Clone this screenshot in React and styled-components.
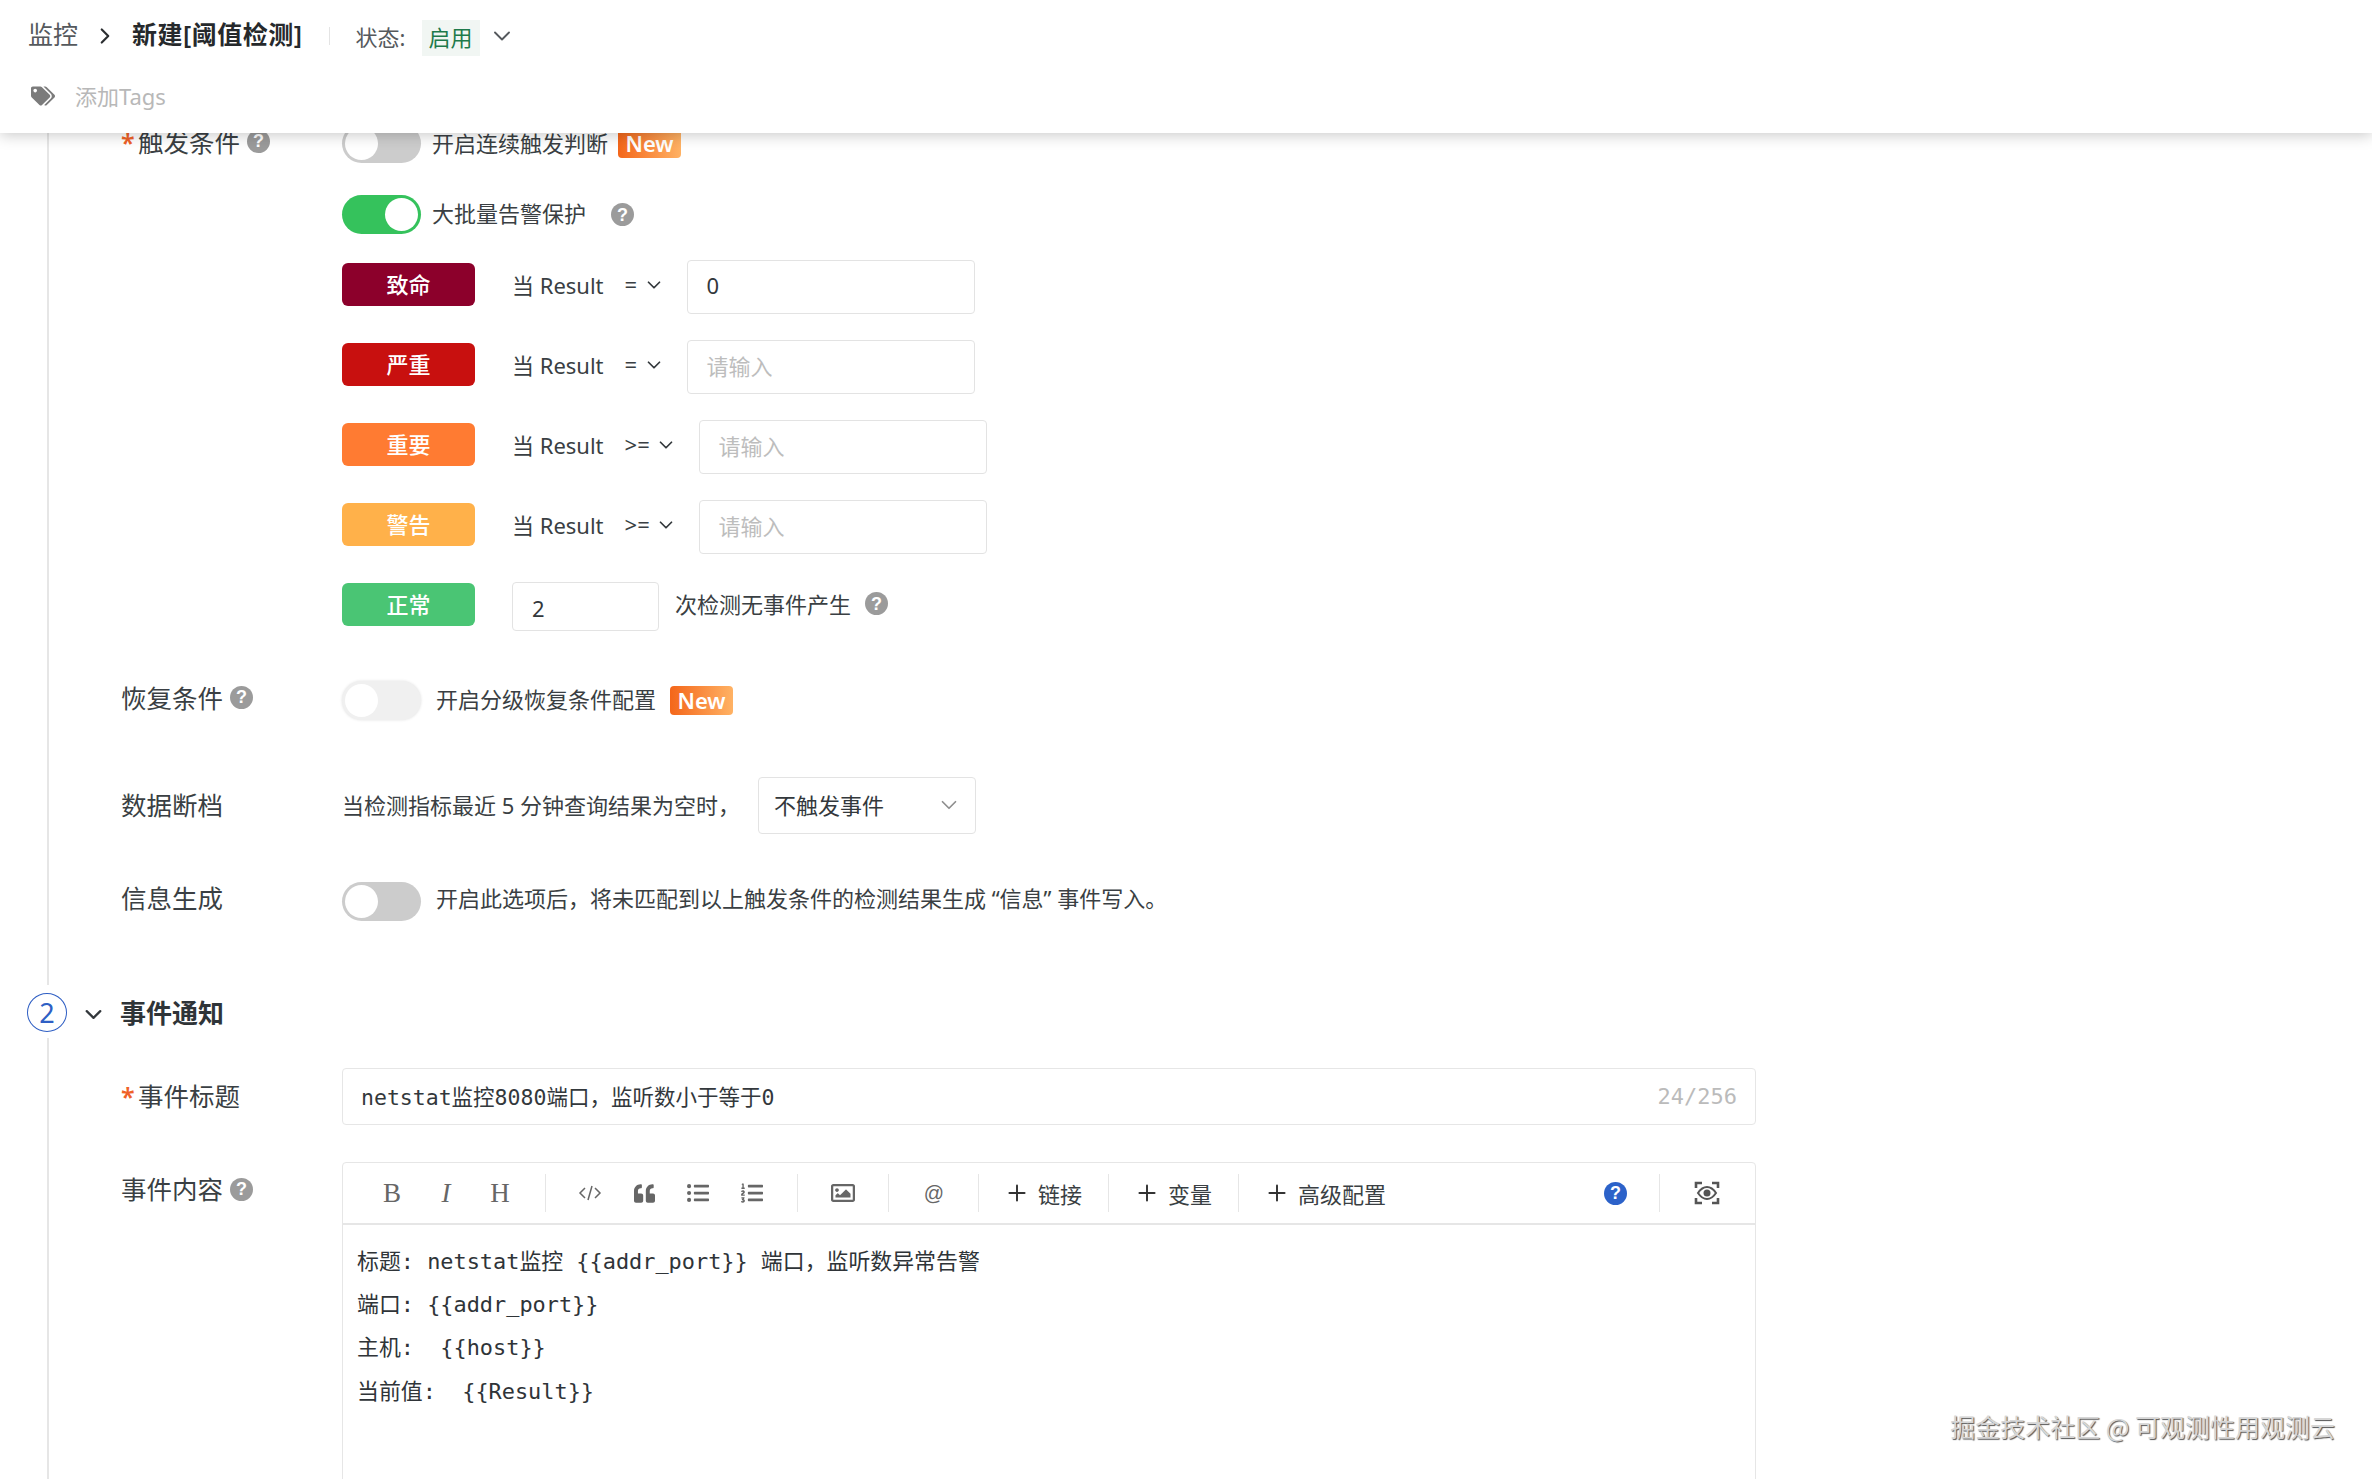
import React from 'react';
import styled, { createGlobalStyle } from 'styled-components';
import { FaQuoteLeft, FaListUl, FaListOl, FaRegImage, FaTags } from 'react-icons/fa';
import { ChevronDown, ChevronRight, Plus } from 'lucide-react';

const Global = createGlobalStyle`
  html, body { margin: 0; padding: 0; background: #fff; }
  * { box-sizing: border-box; }
  body { font-family: "Noto Sans", "Noto Sans CJK SC", sans-serif; color: #33383c; }
`;

const Page = styled.div`
  position: relative;
  height: 1479px;
  overflow: hidden;
  background: #fff;
`;
const Header = styled.header`
  position: absolute;
  top: 0; left: 0; right: 0;
  height: 133px;
  background: #fff;
  z-index: 5;
  padding-left: 28px;
  box-shadow: 0 2px 14px rgba(0,0,0,.22);
`;
const HeaderRow = styled.div`
  display: flex;
  align-items: center;
  height: 72px;
`;
const Crumb = styled.span`
  font-size: 25px;
  color: #55595d;
  margin-bottom: 6px;
`;
const CrumbCurrent = styled.span`
  font-size: 25px;
  letter-spacing: .5px;
  font-weight: 600;
  color: #26292c;
  margin-bottom: 6px;
`;
const CrumbArrow = styled(ChevronRight)`
  color: #2b2e31;
  margin: 0 14px 0 14px;
`;
const HeaderDivider = styled.i`
  width: 1px;
  height: 18px;
  background: #e4e4e4;
  margin: 0 26px;
`;
const StateLabel = styled.span`
  font-size: 22px;
  color: #55595d;
  width: 66px;
`;
const StateTag = styled.span`
  display: flex;
  align-items: center;
  justify-content: center;
  width: 58px;
  height: 36px;
  margin-top: 4px;
  padding-bottom: 5px;
  background: #f1f6f3;
  color: #1e7a4b;
  font-size: 22px;
`;
const StateArrow = styled(ChevronDown)`
  color: #55595d;
  margin-left: 8px;
`;
const TagsRow = styled.div`
  display: flex;
  align-items: center;
  height: 52px;
  padding-left: 3px;
`;
const TagIcon = styled(FaTags)`
  color: #7b7b7b;
  font-size: 24px;
  margin-top: -4px;
`;
const TagsHint = styled.span`
  font-size: 22px;
  color: #b8b8b8;
  margin-left: 20px;
  margin-bottom: 6px;
`;

const Body = styled.main`
  padding-top: 123px;
`;
const Timeline = styled.section`
  margin-left: 47px;
  border-left: 2px solid #e6e6e6;
  padding-left: 72px;
  padding-bottom: ${p => p.$pb || 0}px;
  padding-top: ${p => p.$pt || 0}px;
`;
const Field = styled.div`
  display: flex;
  align-items: ${p => p.$top ? 'flex-start' : 'center'};
  margin-top: ${p => p.$mt || 0}px;
  height: ${p => p.$h ? `${p.$h}px` : 'auto'};
`;
const Label = styled.div`
  flex: none;
  width: 221px;
  display: flex;
  align-items: center;
  font-size: 25.5px;
  line-height: 36px;
  color: #3a3f43;
  margin-top: ${p => p.$mt || 0}px;
`;
const Star = styled.span`
  color: #ef6128;
  width: 17px;
  flex: none;
  font-size: 25px;
  font-weight: 600;
`;
const Help = styled.span`
  flex: none;
  width: 23px;
  height: 23px;
  border-radius: 50%;
  background: ${p => p.$blue ? '#2c62c9' : '#9b9b9b'};
  color: #fff;
  font-family: "Liberation Sans", sans-serif;
  font-size: 18px;
  font-weight: 700;
  line-height: 1;
  display: flex;
  align-items: center;
  justify-content: center;
  margin-left: ${p => p.$ml ?? 7}px;
  margin-top: ${p => p.$mt || 0}px;
`;
const Column = styled.div`
  display: flex;
  flex-direction: column;
  flex: 1;
`;
const Line = styled.div`
  display: flex;
  align-items: ${p => p.$top ? 'flex-start' : 'center'};
  margin-top: ${p => p.$mt || 0}px;
  height: ${p => p.$h}px;
  font-size: 22px;
`;
const Toggle = styled.span`
  position: relative;
  flex: none;
  width: 79px;
  height: 39px;
  border-radius: 20px;
  background: ${p => p.$on ? '#35c25c' : p.$faint ? '#f0f0f0' : '#cccccc'};
  box-shadow: ${p => p.$faint ? '0 0 3px rgba(0,0,0,.12)' : 'none'};
  margin-right: ${p => p.$mr || 11}px;
  &::after {
    content: "";
    position: absolute;
    top: 3px;
    left: ${p => p.$on ? '43px' : '3px'};
    width: 33px;
    height: 33px;
    border-radius: 50%;
    background: #fff;
  }
`;
const NewBadge = styled.span`
  flex: none;
  width: 63px;
  height: 29px;
  border-radius: 4px;
  margin-left: ${p => p.$ml}px;
  background: linear-gradient(90deg, #f4661a, #ffb264);
  color: #fff;
  font-size: 22px;
  font-weight: 600;
  line-height: 28px;
  text-align: center;
`;
const Level = styled.span`
  flex: none;
  width: 133px;
  height: 43px;
  margin-top: 3px;
  margin-right: 37px;
  border-radius: 6px;
  background: ${p => p.$color};
  color: #fff;
  font-size: 22px;
  font-weight: 500;
  line-height: 42px;
  text-align: center;
`;
const Cond = styled.span`
  display: flex;
  align-items: center;
  height: 50px;
  padding-bottom: 3px;
  font-size: 22px;
  color: #3a3f43;
  white-space: pre;
`;
const Op = styled.span`
  margin-left: 21px;
  width: ${p => p.$w}px;
`;
const CondArrow = styled(ChevronDown)`
  color: #33383c;
  margin: 3px 22px 0 -5px;
`;
const Box = styled.div`
  flex: none;
  width: ${p => p.$w}px;
  height: ${p => p.$h}px;
  margin-top: ${p => p.$mt || 0}px;
  border: 1px solid #e3e3e3;
  border-radius: 4px;
  background: #fff;
  display: flex;
  align-items: center;
  padding: ${p => p.$pt || 0}px 0 ${p => p.$pb || 0}px 19px;
  font-size: 22px;
  color: ${p => p.$ph ? '#bdbdbd' : '#33383c'};
`;
const InlineText = styled.span`
  font-size: 22px;
  line-height: 30px;
  color: #3a3f43;
  white-space: pre;
  margin-left: ${p => p.$ml || 0}px;
  margin-bottom: ${p => p.$mb || 0}px;
`;
const Select = styled(Box)`
  justify-content: space-between;
  padding: 0 13px 4px 15px;
  margin-left: 18px;
  margin-top: 0;
`;
const SelectArrow = styled(ChevronDown)`
  color: #8f8f8f;
  margin-top: 3px;
`;
const SectionHead = styled.div`
  display: flex;
  align-items: center;
  height: 39px;
  margin: 8px 0 6px;
  padding-left: 27px;
`;
const StepNo = styled.span`
  flex: none;
  width: 40px;
  height: 39px;
  border: 1px solid #2f5fc4;
  border-radius: 50%;
  color: #2f5fc4;
  font-size: 27px;
  line-height: 37px;
  text-align: center;
`;
const SectionArrow = styled(ChevronDown)`
  color: #33383c;
  margin: 3px 13px 0 13px;
`;
const SectionTitle = styled.h2`
  margin: 0 0 2px;
  font-size: 26px;
  font-weight: 700;
  color: #2f3438;
`;
const TitleBox = styled.div`
  flex: none;
  width: 1414px;
  height: 57px;
  border: 1px solid #e6e6e6;
  border-radius: 4px;
  display: flex;
  align-items: center;
  justify-content: space-between;
  padding: 0 18px 3px 18px;
  font-family: "DejaVu Sans Mono", "Noto Sans CJK SC", monospace;
  font-size: 21.5px;
  color: #33383c;
`;
const Counter = styled.span`
  color: #bbb;
  font-size: 22px;
  margin-top: 3px;
`;
const Editor = styled.div`
  flex: none;
  width: 1414px;
  height: 500px;
  border: 1px solid #e6e6e6;
  border-radius: 4px 4px 0 0;
`;
const Toolbar = styled.div`
  display: flex;
  align-items: center;
  height: 62px;
  padding: 0 35px 0 22px;
  border-bottom: 2px solid #e6e6e6;
  color: #666;
`;
const Tool = styled.span`
  flex: none;
  width: 54px;
  display: flex;
  align-items: center;
  justify-content: center;
  color: #666;
  font-family: ${p => p.$serif ? '"Liberation Serif", serif' : '"Liberation Sans", sans-serif'};
  font-size: ${p => p.$fs || 24}px;
  font-style: ${p => p.$italic ? 'italic' : 'normal'};
`;
const ToolSep = styled.i`
  flex: none;
  width: 1px;
  height: 38px;
  background: #e6e6e6;
  margin: ${p => p.$m};
`;
const AddTool = styled.span`
  display: flex;
  align-items: center;
  gap: 8px;
  font-size: 22px;
  color: #3a3f43;
  margin: ${p => p.$m};
`;
const ToolRight = styled.div`
  margin-left: auto;
  display: flex;
  align-items: center;
`;
const Content = styled.div`
  padding: 15px 14px;
  font-family: "DejaVu Sans Mono", "Noto Sans CJK SC", monospace;
  font-size: 21.9px;
  color: #2f3438;
`;
const ContentLine = styled.div`
  height: 43.2px;
  line-height: 43.2px;
  white-space: pre;
`;
const Watermark = styled.div`
  position: absolute;
  right: 37px;
  top: 1408px;
  z-index: 6;
  font-family: "Noto Sans CJK SC", sans-serif;
  font-size: 25px;
  color: #d6d6d6;
  text-shadow: 1px 1px 1px #555;
  white-space: pre;
`;

const CodeIcon = () => (
  <svg width="24" height="20" viewBox="0 0 24 20" fill="none" stroke="#666" strokeWidth="1.5">
    <path d="M7 5L2 10l5 5M17 5l5 5-5 5M14 3l-4 14" />
  </svg>
);
const EyeScan = () => (
  <svg width="26" height="24" viewBox="0 0 26 24" fill="none" stroke="#555" strokeWidth="2.6">
    <path d="M2 7V2h6M18 2h6v5M2 17v5h6M18 22h6v-5" />
    <path d="M4 12c3-4.5 6-6 9-6s6 1.500 9 6c-3 4.500-6 6-9 6s-6-1.500-9-6z" strokeWidth="2" />
    <circle cx="13" cy="12" r="3.500" fill="#555" stroke="none" />
  </svg>
);

const levels = [
  { name: '致命', color: '#8c002b', op: '=', w: 23, ph: false, value: '0' },
  { name: '严重', color: '#c8100f', op: '=', w: 23, ph: true, value: '请输入' },
  { name: '重要', color: '#ff7b32', op: '>=', w: 35, ph: true, value: '请输入' },
  { name: '警告', color: '#ffb14a', op: '>=', w: 35, ph: true, value: '请输入' },
];
const lines = [
  '标题: netstat监控 {{addr_port}} 端口，监听数异常告警',
  '端口: {{addr_port}}',
  '主机:  {{host}}',
  '当前值:  {{Result}}',
];

export default function App() {
  return (
    <Page>
      <Global />
      <Header>
        <HeaderRow>
          <Crumb>监控</Crumb>
          <CrumbArrow size={26} strokeWidth={2} />
          <CrumbCurrent>新建[阈值检测]</CrumbCurrent>
          <HeaderDivider />
          <StateLabel>状态:</StateLabel>
          <StateTag>启用</StateTag>
          <StateArrow size={28} strokeWidth={1.6} />
        </HeaderRow>
        <TagsRow>
          <TagIcon />
          <TagsHint>添加Tags</TagsHint>
        </TagsRow>
      </Header>
      <Body>
        <Timeline $pb={64}>
          <Field $top>
            <Label $mt={1}>
              <Star>*</Star>触发条件<Help $mt={-2}>?</Help>
            </Label>
            <Column>
              <Line $h={40}>
                <Toggle />
                <InlineText>开启连续触发判断</InlineText>
                <NewBadge $ml={10}>New</NewBadge>
              </Line>
              <Line $h={39} $mt={32}>
                <Toggle $on />
                <InlineText $mb={3}>大批量告警保护</InlineText>
                <Help $ml={25}>?</Help>
              </Line>
              {levels.map(l => (
                <Line key={l.name} $top $h={54} $mt={26}>
                  <Level $color={l.color}>{l.name}</Level>
                  <Cond>
                    当 Result
                    <Op $w={l.w}>{l.op}</Op>
                    <CondArrow size={22} strokeWidth={1.9} />
                  </Cond>
                  <Box $w={288} $h={54} $ph={l.ph} $pb={4}>{l.value}</Box>
                </Line>
              ))}
              <Line $top $h={54} $mt={26}>
                <Level $color="#4ac574">正常</Level>
                <Box $w={147} $h={49} $mt={2} $pt={2}>2</Box>
                <Cond>
                  <InlineText $ml={16}>次检测无事件产生</InlineText>
                </Cond>
                <Cond>
                  <Help $ml={14}>?</Help>
                </Cond>
              </Line>
            </Column>
          </Field>
          <Field $mt={45} $h={42}>
            <Label $mt={-4}>恢复条件<Help $mt={-2}>?</Help></Label>
            <Toggle $faint $mr={15} />
            <InlineText $mb={3}>开启分级恢复条件配置</InlineText>
            <NewBadge $ml={14}>New</NewBadge>
          </Field>
          <Field $mt={56} $h={57}>
            <Label $mt={-1}>数据断档</Label>
            <InlineText $mb={2}>当检测指标最近 5 分钟查询结果为空时，</InlineText>
            <Select $w={218} $h={57}>
              不触发事件
              <SelectArrow size={26} strokeWidth={1.6} />
            </Select>
          </Field>
          <Field $mt={48} $h={39}>
            <Label $mt={-7}>信息生成</Label>
            <Toggle $mr={15} />
            <InlineText $mb={7}>开启此选项后，将未匹配到以上触发条件的检测结果生成 “信息” 事件写入。</InlineText>
          </Field>
        </Timeline>
        <SectionHead>
          <StepNo>2</StepNo>
          <SectionArrow size={27} strokeWidth={2} />
          <SectionTitle>事件通知</SectionTitle>
        </SectionHead>
        <Timeline $pt={30}>
          <Field $h={57}>
            <Label $mt={-1}><Star>*</Star>事件标题</Label>
            <TitleBox>
              netstat监控8080端口，监听数小于等于0
              <Counter>24/256</Counter>
            </TitleBox>
          </Field>
          <Field $top $mt={37}>
            <Label $mt={9}>事件内容<Help>?</Help></Label>
            <Editor>
              <Toolbar>
                <Tool $serif $fs={27}>B</Tool>
                <Tool $serif $italic $fs={27}>I</Tool>
                <Tool $serif $fs={27}>H</Tool>
                <ToolSep $m="0 17px 0 18px" />
                <Tool><CodeIcon /></Tool>
                <Tool><FaQuoteLeft size={21} /></Tool>
                <Tool><FaListUl size={22} /></Tool>
                <Tool><FaListOl size={22} /></Tool>
                <ToolSep $m="0 18px" />
                <Tool><FaRegImage size={24} /></Tool>
                <ToolSep $m="0 18px" />
                <Tool $fs={20}>@</Tool>
                <ToolSep $m="0 0 0 17px" />
                <AddTool $m="0 26px 0 25px"><Plus size={26} strokeWidth={1.8} color="#333" />链接</AddTool>
                <ToolSep $m="0" />
                <AddTool $m="0 26px 0 25px"><Plus size={26} strokeWidth={1.8} color="#333" />变量</AddTool>
                <ToolSep $m="0" />
                <AddTool $m="0 0 0 25px"><Plus size={26} strokeWidth={1.8} color="#333" />高级配置</AddTool>
                <ToolRight>
                  <Help $blue $ml={0}>?</Help>
                  <ToolSep $m="0 34px 0 32px" />
                  <EyeScan />
                </ToolRight>
              </Toolbar>
              <Content>
                {lines.map(l => <ContentLine key={l}>{l}</ContentLine>)}
              </Content>
            </Editor>
          </Field>
        </Timeline>
      </Body>
      <Watermark>掘金技术社区 @ 可观测性用观测云</Watermark>
    </Page>
  );
}
